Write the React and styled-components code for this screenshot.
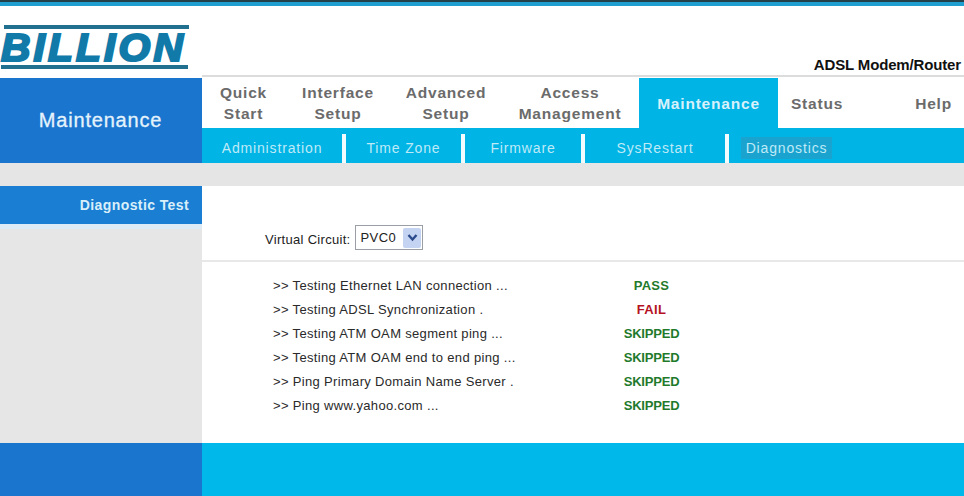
import React from "react";
import styled, { createGlobalStyle } from "styled-components";

const GlobalStyle = createGlobalStyle`
html, body {
  margin: 0;
  padding: 0;
  background: #fff;
  font-family: "Liberation Sans", Arial, sans-serif;
}
`;

const Page = styled.div`
  width: 964px;
  height: 496px;
  overflow: hidden;
  display: flex;
  flex-direction: column;
`;

const TopRule = styled.div`
  height: 4px;
  border-top: 2px solid #24414a;
  background: #1f9fd0;
  flex: none;
`;

const Header = styled.header`
  height: 69px;
  flex: none;
  display: flex;
  justify-content: space-between;
  align-items: flex-end;
  padding-right: 3px;
`;

const Tagline = styled.div`
  font-size: 15px;
  font-weight: bold;
  letter-spacing: -0.15px;
  color: #111;
  line-height: 16px;
  padding-bottom: 2px;
`;

const HeaderRule = styled.div`
  height: 2px;
  flex: none;
  margin-left: 202px;
  background: #dcdcdc;
`;

const NavArea = styled.div`
  height: 86px;
  flex: none;
  display: flex;
  padding-top: 1px;
  box-sizing: border-box;
`;

const SectionTitle = styled.div`
  width: 202px;
  flex: none;
  background: #1a75cf;
  color: #e4f3fb;
  font-size: 20px;
  letter-spacing: 0.8px;
  -webkit-text-stroke: 0.3px #e4f3fb;
  display: flex;
  align-items: center;
  justify-content: center;
  padding-right: 1px;
  box-sizing: border-box;
`;

const NavColumn = styled.div`
  flex: 1;
  display: flex;
  flex-direction: column;
`;

const Tabs = styled.nav`
  height: 50px;
  flex: none;
  display: flex;
`;

const Tab = styled.div`
  width: ${(p) => p.$width}px;
  flex: none;
  display: flex;
  align-items: center;
  justify-content: ${(p) => (p.$end ? "flex-end" : "center")};
  padding-right: ${(p) => (p.$end ? "12px" : "0")};
  box-sizing: border-box;
  text-align: center;
  font-size: 15.5px;
  font-weight: bold;
  letter-spacing: 0.8px;
  line-height: 21px;
  color: ${(p) => (p.$active ? "#d8f1fb" : "#6b6b6b")};
  background: ${(p) => (p.$active ? "#00b4e6" : "transparent")};
`;

const SubBar = styled.div`
  flex: 1;
  display: flex;
  background: #00b4e6;
  padding-top: 6px;
`;

const SubItem = styled.div`
  width: ${(p) => p.$width}px;
  flex: none;
  box-sizing: border-box;
  display: flex;
  align-items: center;
  justify-content: center;
  border-right: ${(p) => (p.$last ? "none" : "4px solid #f2fbfe")};
  padding-bottom: 1px;
`;

const SubLabel = styled.span`
  font-size: 14px;
  letter-spacing: 0.85px;
  color: #bfeaf7;
  padding: 3px 5px;
  background: ${(p) => (p.$active ? "#1ba3cf" : "transparent")};
`;

const GreyBand = styled.div`
  height: 23px;
  flex: none;
  background: #e4e5e4;
`;

const Content = styled.div`
  flex: 1;
  display: flex;
`;

const Sidebar = styled.aside`
  width: 202px;
  flex: none;
  background: #e6e6e6;
`;

const SideItem = styled.div`
  height: 38px;
  box-sizing: border-box;
  background: #1a7fd2;
  color: #d9effa;
  font-size: 14px;
  font-weight: bold;
  letter-spacing: 0.4px;
  text-align: right;
  padding: 12px 13px 0 0;
  line-height: 15px;
`;

const SideItemEdge = styled.div`
  height: 5px;
  background: #dcebf5;
`;

const Main = styled.main`
  flex: 1;
  background: #fff;
`;

const CircuitRow = styled.div`
  height: 76px;
  box-sizing: border-box;
  display: flex;
  align-items: flex-start;
  padding: 39px 0 0 63px;
  border-bottom: 2px solid #e8e8e8;
  font-size: 13px;
  color: #222;
`;

const CircuitLabel = styled.span`
  line-height: 15px;
  padding-top: 7px;
  letter-spacing: 0.3px;
`;

const SelectBox = styled.div`
  width: 68px;
  height: 25px;
  margin-left: 5px;
  box-sizing: border-box;
  border: 1px solid #9a9fa6;
  display: flex;
  align-items: center;
  justify-content: space-between;
  padding: 1px 1px 1px 4px;
  font-size: 13px;
  letter-spacing: 0.4px;
  color: #222;
`;

const SelectArrow = styled.div`
  width: 18px;
  height: 20px;
  background: #c5d3f2;
  border-radius: 2px;
  display: flex;
  align-items: center;
  justify-content: center;
`;

const Results = styled.div`
  padding: 11px 0 0 71px;
`;

const ResultRow = styled.div`
  height: 24px;
  display: flex;
  align-items: center;
  font-size: 13px;
  color: #2a2a2a;
`;

const ResultName = styled.div`
  width: 323px;
  flex: none;
  letter-spacing: 0.33px;
`;

const ResultStatus = styled.div`
  width: 111px;
  flex: none;
  padding-top: 1px;
  text-align: center;
  font-weight: bold;
  font-size: 13px;
  letter-spacing: ${(p) => (p.$wide ? "0.3px" : "-0.2px")};
  color: ${(p) => (p.$fail ? "#b5121f" : "#1f7a2c")};
`;

const Footer = styled.footer`
  height: 53px;
  flex: none;
  display: flex;
`;

const FooterLeft = styled.div`
  width: 202px;
  flex: none;
  background: #1a75cf;
`;

const FooterRight = styled.div`
  flex: 1;
  background: #00b8ea;
`;

const tabs = [
  { label: ["Quick", "Start"], width: 83 },
  { label: ["Interface", "Setup"], width: 106 },
  { label: ["Advanced", "Setup"], width: 110 },
  { label: ["Access", "Management"], width: 138 },
  { label: ["Maintenance"], width: 139, active: true },
  { label: ["Status"], width: 78 },
  { label: ["Help"], width: 108, end: true },
];

const subItems = [
  { label: "Administration", width: 144 },
  { label: "Time Zone", width: 119 },
  { label: "Firmware", width: 120 },
  { label: "SysRestart", width: 144 },
  { label: "Diagnostics", width: 115, active: true, last: true },
];

const results = [
  { name: ">> Testing Ethernet LAN connection ...", status: "PASS", wide: true },
  { name: ">> Testing ADSL Synchronization .", status: "FAIL", fail: true, wide: true },
  { name: ">> Testing ATM OAM segment ping ...", status: "SKIPPED" },
  { name: ">> Testing ATM OAM end to end ping ...", status: "SKIPPED" },
  { name: ">> Ping Primary Domain Name Server .", status: "SKIPPED" },
  { name: ">> Ping www.yahoo.com ...", status: "SKIPPED" },
];

function Logo() {
  return (
    <svg width="196" height="46" viewBox="0 0 196 46" style={{ display: "block", marginBottom: 4 }}>
      <rect x="4" y="0" width="185" height="4" fill="#22708f" />
      <rect x="1" y="40" width="187" height="4" fill="#22708f" />
      <text
        x="1"
        y="36"
        textLength="185"
        lengthAdjust="spacingAndGlyphs"
        letterSpacing="3"
        fontFamily="'Liberation Sans', sans-serif"
        fontWeight="bold"
        fontStyle="italic"
        fontSize="39"
        fill="#127aa8"
        stroke="#127aa8"
        strokeWidth="2.2"
      >
        BILLION
      </text>
    </svg>
  );
}

export default function App() {
  return (
    <>
      <GlobalStyle />
      <Page>
        <TopRule />
        <Header>
          <Logo />
          <Tagline>ADSL Modem/Router</Tagline>
        </Header>
        <HeaderRule />
        <NavArea>
          <SectionTitle>Maintenance</SectionTitle>
          <NavColumn>
            <Tabs>
              {tabs.map((tab) => (
                <Tab key={tab.label[0]} $width={tab.width} $active={tab.active} $end={tab.end}>
                  <div>
                    {tab.label.map((line) => (
                      <div key={line}>{line}</div>
                    ))}
                  </div>
                </Tab>
              ))}
            </Tabs>
            <SubBar>
              {subItems.map((item) => (
                <SubItem key={item.label} $width={item.width} $last={item.last}>
                  <SubLabel $active={item.active}>{item.label}</SubLabel>
                </SubItem>
              ))}
            </SubBar>
          </NavColumn>
        </NavArea>
        <GreyBand />
        <Content>
          <Sidebar>
            <SideItem>Diagnostic Test</SideItem>
            <SideItemEdge />
          </Sidebar>
          <Main>
            <CircuitRow>
              <CircuitLabel>Virtual Circuit:</CircuitLabel>
              <SelectBox>
                PVC0
                <SelectArrow>
                  <svg width="11" height="9" viewBox="0 0 11 9">
                    <path d="M1.5 2 L5.5 6.5 L9.5 2" fill="none" stroke="#2b4a8c" strokeWidth="2.4" />
                  </svg>
                </SelectArrow>
              </SelectBox>
            </CircuitRow>
            <Results>
              {results.map((row) => (
                <ResultRow key={row.name}>
                  <ResultName>{row.name}</ResultName>
                  <ResultStatus $fail={row.fail} $wide={row.wide}>{row.status}</ResultStatus>
                </ResultRow>
              ))}
            </Results>
          </Main>
        </Content>
        <Footer>
          <FooterLeft />
          <FooterRight />
        </Footer>
      </Page>
    </>
  );
}
